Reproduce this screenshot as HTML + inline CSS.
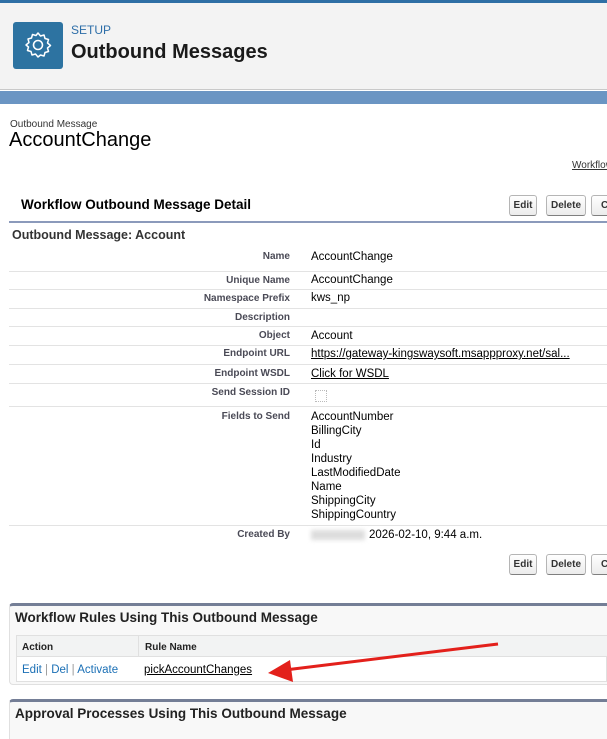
<!DOCTYPE html>
<html><head><meta charset="utf-8"><style>
*{margin:0;padding:0;box-sizing:border-box}
body{width:607px;height:731px;overflow:hidden;background:#fff;font-family:"Liberation Sans",Arial,sans-serif;position:relative;color:#000}
.a{position:absolute;white-space:nowrap}
.lbl{position:absolute;right:317px;font-size:10px;font-weight:bold;color:#4a4a56;white-space:nowrap}
.val{position:absolute;left:311px;font-size:11.5px;color:#000;white-space:nowrap}
.sep{position:absolute;left:9px;right:0;height:1px;background:#e3e3e3}
.btn{position:absolute;height:21px;border:1px solid #b5b5b5;border-bottom-color:#7f7f7f;border-radius:3px;background:linear-gradient(#fff,#ececec);font-size:10px;font-weight:bold;color:#333;text-align:center;line-height:19px}
u{text-decoration:underline}
</style></head><body>
<div class="a" style="left:0;top:0;width:607px;height:3px;background:#2e6fa5"></div>
<div class="a" style="left:0;top:3px;width:607px;height:87px;background:#f3f3f3;border-bottom:1px solid #c9c9c9"></div>
<div class="a" style="left:0;top:91px;width:607px;height:13px;background:#6b95c3"></div>
<div class="a" style="left:13px;top:22px;width:50px;height:47px;background:#2d73a1;border-radius:3px"></div>
<svg class="a" style="left:22px;top:29px" width="32" height="32" viewBox="0 0 32 32"><path d="M16 4l2.5 3 3.5-1 1 3.5 3.5 1-1 3.5 3 2.5-3 2.5 1 3.5-3.5 1-1 3.5-3.5-1L16 28l-2.5-3-3.5 1-1-3.5-3.5-1 1-3.5L4 16l3-2.5-1-3.5 3.5-1 1-3.5 3.5 1z" fill="none" stroke="#fff" stroke-width="1.5" stroke-linejoin="round"/><circle cx="16" cy="16" r="4.5" fill="none" stroke="#fff" stroke-width="1.6"/></svg>
<div class="a" style="left:71px;top:23px;font-size:12px;color:#2d6ea8">SETUP</div>
<div class="a" style="left:71px;top:41px;font-size:20px;font-weight:bold;color:#1a1a1a">Outbound Messages</div>
<div class="a" style="left:10px;top:119px;font-size:10px;color:#333">Outbound Message</div>
<div class="a" style="left:9px;top:129px;font-size:20px;color:#000">AccountChange</div>
<div class="a" style="left:572px;top:160px;font-size:10px;color:#333"><u>Workflow</u></div>
<div class="a" style="left:21px;top:197px;font-size:13.5px;font-weight:bold">Workflow Outbound Message Detail</div>
<div class="btn" style="left:509px;top:195px;width:28px">Edit</div>
<div class="btn" style="left:546px;top:195px;width:40px">Delete</div>
<div class="btn" style="left:591px;top:195px;width:30px">Cl</div>
<div class="a" style="left:9px;top:221px;width:598px;height:2px;background:#8b9abb"></div>
<div class="a" style="left:12px;top:228px;font-size:12.5px;font-weight:bold;color:#333">Outbound Message: Account</div>
<div class="lbl" style="top:251px">Name</div><div class="val" style="top:251px">AccountChange</div>
<div class="sep" style="top:271px"></div>
<div class="lbl" style="top:275px">Unique Name</div><div class="val" style="top:274px">AccountChange</div>
<div class="sep" style="top:289px"></div>
<div class="lbl" style="top:293px">Namespace Prefix</div><div class="val" style="top:292px">kws_np</div>
<div class="sep" style="top:308px"></div>
<div class="lbl" style="top:312px">Description</div>
<div class="sep" style="top:326px"></div>
<div class="lbl" style="top:330px">Object</div><div class="val" style="top:330px">Account</div>
<div class="sep" style="top:345px"></div>
<div class="lbl" style="top:348px">Endpoint URL</div><div class="val" style="top:348px"><u>https://gateway-kingswaysoft.msappproxy.net/sal...</u></div>
<div class="sep" style="top:364px"></div>
<div class="lbl" style="top:368px">Endpoint WSDL</div><div class="val" style="top:368px"><u>Click for WSDL</u></div>
<div class="sep" style="top:383px"></div>
<div class="lbl" style="top:387px">Send Session ID</div>
<div class="a" style="left:315px;top:390px;width:12px;height:12px;border:1px dotted #bbb"></div>
<div class="sep" style="top:406px"></div>
<div class="lbl" style="top:411px">Fields to Send</div>
<div class="val" style="top:410px;line-height:14px">AccountNumber<br>BillingCity<br>Id<br>Industry<br>LastModifiedDate<br>Name<br>ShippingCity<br>ShippingCountry</div>
<div class="sep" style="top:525px"></div>
<div class="lbl" style="top:529px">Created By</div>
<div class="a" style="left:311px;top:530px;width:54px;height:10px;background:#ddd;filter:blur(2px)"></div>
<div class="a" style="left:369px;top:529px;font-size:11.5px">2026-02-10, 9:44 a.m.</div>
<div class="btn" style="left:509px;top:554px;width:28px">Edit</div>
<div class="btn" style="left:546px;top:554px;width:40px">Delete</div>
<div class="btn" style="left:591px;top:554px;width:30px">Cl</div>
<div class="a" style="left:9px;top:603px;width:598px;height:82px;background:#f8f8f8;border-top:3px solid #747e96;border-left:1px solid #e0e0e0;border-bottom:1px solid #e0e0e0;border-radius:4px 0 0 4px"></div>
<div class="a" style="left:15px;top:610px;font-size:13.5px;font-weight:bold;color:#222">Workflow Rules Using This Outbound Message</div>
<div class="a" style="left:16px;top:635px;width:591px;height:47px;border:1px solid #e0e0e0;background:#fff"></div>
<div class="a" style="left:17px;top:636px;width:590px;height:21px;background:#f2f3f3;border-bottom:1px solid #e0e0e0"></div>
<div class="a" style="left:138px;top:636px;width:1px;height:21px;background:#e0e0e0"></div>
<div class="a" style="left:22px;top:642px;font-size:10px;font-weight:bold;color:#222">Action</div>
<div class="a" style="left:145px;top:642px;font-size:10px;font-weight:bold;color:#222">Rule Name</div>
<div class="a" style="left:22px;top:664px;font-size:11.5px;color:#1a6fb5">Edit <span style="color:#999">|</span> Del <span style="color:#999">|</span> Activate</div>
<div class="a" style="left:144px;top:664px;font-size:11.5px"><u>pickAccountChanges</u></div>
<svg class="a" style="left:260px;top:638px" width="245" height="45"><line x1="238" y1="6" x2="25" y2="32" stroke="#e3201b" stroke-width="3"/><polygon points="8,35 30,22 33,44" fill="#e3201b"/></svg>
<div class="a" style="left:9px;top:699px;width:598px;height:40px;background:#f8f8f8;border-top:3px solid #747e96;border-left:1px solid #e0e0e0;border-radius:4px 0 0 0"></div>
<div class="a" style="left:15px;top:706px;font-size:13.5px;font-weight:bold;color:#222">Approval Processes Using This Outbound Message</div>
</body></html>
